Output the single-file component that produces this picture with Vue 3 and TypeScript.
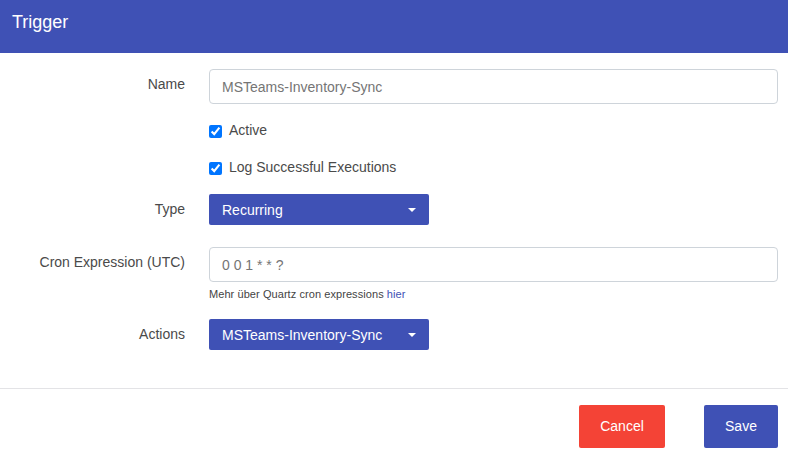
<script setup lang="ts">
// Trigger edit dialog: header, form rows with right-aligned labels, footer actions.
import { ref } from "vue";

const name = ref("MSTeams-Inventory-Sync");
const cron = ref("0 0 1 * * ?");
const active = ref(true);
const logSuccess = ref(true);
</script>

<template>
  <div class="dialog">
    <header class="head">Trigger</header>

    <form class="form" @submit.prevent>
      <label class="label name-label">Name</label>
      <input v-model="name" class="field name-field" type="text" />

      <label class="check active-check">
        <input v-model="active" type="checkbox" />
        <span>Active</span>
      </label>

      <label class="check log-check">
        <input v-model="logSuccess" type="checkbox" />
        <span>Log Successful Executions</span>
      </label>

      <label class="label type-label">Type</label>
      <button class="select type-select" type="button">
        <span>Recurring</span>
        <i class="caret" aria-hidden="true" />
      </button>

      <label class="label cron-label">Cron Expression (UTC)</label>
      <div class="cron-cell">
        <input v-model="cron" class="field" type="text" />
        <p class="help">Mehr über Quartz cron expressions <a href="#">hier</a></p>
      </div>

      <label class="label actions-label">Actions</label>
      <button class="select" type="button">
        <span>MSTeams-Inventory-Sync</span>
        <i class="caret" aria-hidden="true" />
      </button>
    </form>

    <footer class="foot">
      <button class="btn cancel" type="button">Cancel</button>
      <button class="btn save" type="button">Save</button>
    </footer>
  </div>
</template>

<style scoped>
.dialog {
  width: 788px;
  height: 457px;
  display: flex;
  flex-direction: column;
  background: #fff;
  color: #333;
  font-family: "Liberation Sans", Arial, sans-serif;
  font-size: 14px;
}
.head {
  height: 53px;
  box-sizing: border-box;
  padding: 12px 12px 0;
  background: #3f51b5;
  color: #fff;
  font-size: 18px;
  line-height: 21px;
}
.form {
  display: grid;
  grid-template-columns: 185px 220px 1fr;
  column-gap: 24px;
  align-content: start;
  height: 336px;
  box-sizing: border-box;
  padding: 16px 10px 0 0;
  border-bottom: 1px solid #e3e3e6;
}
.label {
  grid-column: 1;
  text-align: right;
  line-height: 16px;
  color: #4a4a4a;
}
.name-label {
  padding-top: 7px;
}
.name-field,
.cron-cell {
  grid-column: 2 / 4;
}
.type-label {
  padding-top: 7px;
  margin-top: 19px;
}
.type-select {
  margin-top: 19px;
}
.cron-label {
  margin-top: 22px;
  padding-top: 7px;
}
.cron-cell {
  margin-top: 22px;
}
.actions-label {
  padding-top: 7px;
}
.field {
  display: block;
  width: 100%;
  height: 35px;
  box-sizing: border-box;
  padding: 0 12px;
  border: 1px solid #ced4da;
  border-radius: 4px;
  background: #fff;
  color: #757575;
  font: inherit;
  outline: none;
}
.check {
  grid-column: 2 / 4;
  display: flex;
  align-items: center;
  gap: 7px;
  height: 16px;
  color: #4a4a4a;
}
.check input {
  width: 13px;
  height: 13px;
  margin: 2px 0 0;
  accent-color: #0075ff;
}
.active-check {
  margin-top: 18px;
}
.log-check {
  margin-top: 21px;
}
.select {
  display: flex;
  align-items: center;
  justify-content: space-between;
  width: 220px;
  height: 31px;
  padding: 0 13px;
  border: none;
  border-radius: 2px;
  background: #3f51b5;
  color: #fff;
  font: inherit;
  cursor: pointer;
}
.caret {
  width: 0;
  height: 0;
  border-left: 4px solid transparent;
  border-right: 4px solid transparent;
  border-top: 4px solid #fff;
}
.help {
  margin: 6px 0 18px;
  font-size: 11px;
  letter-spacing: 0.07px;
  line-height: 13px;
  color: #444;
}
.help a {
  color: #3f51b5;
  text-decoration: none;
}
.foot {
  display: flex;
  justify-content: flex-end;
  gap: 39px;
  padding: 16px 10px 0 0;
}
.btn {
  height: 43px;
  padding: 0 0 2px;
  border: none;
  border-radius: 2px;
  color: #fff;
  font: inherit;
  cursor: pointer;
}
.cancel {
  width: 86px;
  background: #f44336;
}
.save {
  width: 74px;
  background: #3f51b5;
}
</style>
